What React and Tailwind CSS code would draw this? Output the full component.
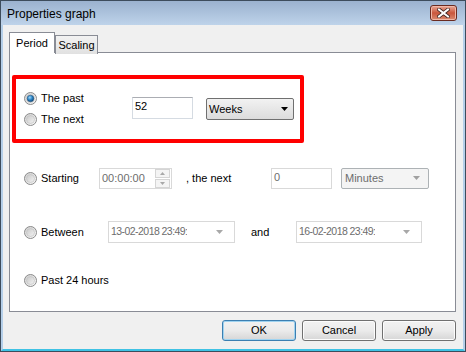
import React from "react";

const F = { fontFamily: '"Liberation Sans", Arial, sans-serif' };

function Radio({ checked }) {
  return (
    <svg width="13" height="13" viewBox="0 0 13 13" className="shrink-0">
      <defs>
        <linearGradient id="rg" x1="0" y1="0" x2="1" y2="1">
          <stop offset="0" stopColor="#d0d0d0" />
          <stop offset="1" stopColor="#fafafa" />
        </linearGradient>
        <linearGradient id="ri" x1="0" y1="0" x2="1" y2="1">
          <stop offset="0" stopColor="#c8c8c8" />
          <stop offset="1" stopColor="#f4f4f4" />
        </linearGradient>
        <radialGradient id="rb" cx="0.4" cy="0.35" r="0.7">
          <stop offset="0" stopColor="#9fd7f8" />
          <stop offset="0.5" stopColor="#2d86c8" />
          <stop offset="1" stopColor="#0b3f6e" />
        </radialGradient>
      </defs>
      <circle cx="6.5" cy="6.5" r="6" fill="url(#rg)" stroke="#8a8a8a" strokeWidth="1" />
      <circle cx="6.5" cy="6.5" r="4" fill="url(#ri)" stroke="#bdbdbd" strokeWidth="0.6" />
      {checked && <circle cx="6.5" cy="6.5" r="3.3" fill="url(#rb)" stroke="#1b4f7a" strokeWidth="0.5" />}
    </svg>
  );
}

function Arrow({ color = "#000", w = 7, h = 4 }) {
  return (
    <svg width={w} height={h} viewBox={`0 0 ${w} ${h}`} className="shrink-0">
      <polygon points={`0,0 ${w},0 ${w / 2},${h}`} fill={color} />
    </svg>
  );
}

function Btn({ children, def }) {
  return (
    <div
      className={`w-[74px] h-[21px] rounded-[3px] border flex items-center justify-center text-[11px] text-black bg-gradient-to-b from-[#f2f2f2] via-[#ebebeb] to-[#d6d6d6] ${
        def ? "border-[#3c7fb1] shadow-[inset_0_0_0_1px_#9fd3f0]" : "border-[#707070] shadow-[inset_0_0_0_1px_#fcfcfc]"
      }`}
    >
      {children}
    </div>
  );
}

function DateBox({ value, w }) {
  return (
    <div className={`${w} h-[22px] border border-[#d9d9d9] flex items-center pl-[2px] pr-[11px] text-[#6d6d6d]`}>
      <span className="w-[76px] overflow-hidden whitespace-nowrap text-[10.5px] tracking-[-0.55px]">{value}</span>
      <span className="flex-1" />
      <Arrow color="#a8a8a8" w={7} h={4} />
    </div>
  );
}

export default function App() {
  return (
    <div className="w-[466px] h-[352px] flex flex-col bg-[#f0f0f0] border border-[#3d4c5c]" style={F}>
      {/* title bar */}
      <div className="h-[24px] flex items-start justify-between pl-[6px] pr-[8px] bg-gradient-to-b from-[#9bb2cf] to-[#bed3ea]">
        <div className="text-[12px] text-black leading-none mt-[7px]">Properties graph</div>
        <div className="mt-[4px] w-[27px] h-[16px] rounded-[3px] border border-[#6a2b20] bg-gradient-to-b from-[#e8a896] via-[#c9563c] to-[#d98a70] flex items-center justify-center shadow-[inset_0_0_0_1px_#f0b8a8]">
          <svg width="13" height="10" viewBox="0 0 13 10">
            <path d="M2 1.5 L11 8.5 M11 1.5 L2 8.5" stroke="#3b2420" strokeWidth="3.6" strokeLinecap="square" />
            <path d="M2 1.5 L11 8.5 M11 1.5 L2 8.5" stroke="#ffffff" strokeWidth="2" strokeLinecap="square" />
          </svg>
        </div>
      </div>

      {/* body */}
      <div className="flex-1 flex flex-col pl-[6px] pr-[7px] border-x-2 border-b-2 border-x-[#b5cfe9] border-b-[#3fc2e4]">
        {/* tabs */}
        <div className="mt-[7px] flex items-end h-[21px] relative z-10">
          <div className="w-[46px] h-[21px] bg-white border-l border-t border-r border-[#898c95] flex items-center justify-center text-[11px] text-black">
            Period
          </div>
          <div className="w-[43px] h-[19px] -mb-px bg-gradient-to-b from-[#f2f2f2] to-[#e1e1e1] border-l border-t border-r border-[#898c95] flex items-center justify-center text-[11px] text-black">
            Scaling
          </div>
        </div>

        {/* panel */}
        <div className="-mt-px h-[260px] bg-white border border-[#898c95] flex flex-col text-[11px] text-black">
          {/* red box */}
          <div className="ml-[2px] mt-[22px] w-[292px] h-[68px] border-4 border-[#ff0000] rounded-[2px] flex items-center">
            <div className="pl-[8px] w-[116px] flex flex-col">
              <div className="h-[21px] flex items-center gap-[4px]">
                <Radio checked />
                <span>The past</span>
              </div>
              <div className="h-[21px] flex items-center gap-[4px]">
                <Radio />
                <span>The next</span>
              </div>
            </div>
            <div className="w-[61px] h-[22px] border border-[#d5dbe2] border-t-[#abadb3] pl-[2px] pt-[3px] leading-none -mt-[2px]">
              52
            </div>
            <div className="ml-[13px] w-[88px] h-[22px] rounded-[2px] border border-[#707070] bg-gradient-to-b from-[#f2f2f2] to-[#dcdcdc] flex items-center justify-between pl-[2px] pr-[5px]">
              <span>Weeks</span>
              <Arrow />
            </div>
          </div>

          {/* starting */}
          <div className="mt-[24px] pl-[14px] h-[22px] flex items-center">
            <div className="w-[75px] flex items-center gap-[4px]">
              <Radio />
              <span>Starting</span>
            </div>
            <div className="w-[73px] h-[21px] border border-[#d9d9d9] flex items-center justify-between pl-[2px] pr-[1px]">
              <span className="text-[#6d6d6d]">00:00:00</span>
              <div className="flex flex-col gap-px">
                <div className="w-[15px] h-[9px] border border-[#d5d5d5] bg-[#f4f4f4] flex items-center justify-center">
                  <svg width="5" height="3"><polygon points="0,3 5,3 2.5,0" fill="#a8a8a8" /></svg>
                </div>
                <div className="w-[15px] h-[9px] border border-[#d5d5d5] bg-[#f4f4f4] flex items-center justify-center">
                  <svg width="5" height="3"><polygon points="0,0 5,0 2.5,3" fill="#a8a8a8" /></svg>
                </div>
              </div>
            </div>
            <div className="ml-[14px] w-[85px]">, the next</div>
            <div className="w-[61px] h-[21px] border border-[#d9d9d9] pl-[2px] pt-[3px] leading-none text-[#6d6d6d]">0</div>
            <div className="ml-[9px] w-[88px] h-[21px] rounded-[2px] border border-[#adb2b5] bg-[#f4f4f4] flex items-center justify-between pl-[3px] pr-[8px] text-[#6d6d6d]">
              <span>Minutes</span>
              <Arrow color="#a0a0a0" w={7} h={4} />
            </div>
          </div>

          {/* between */}
          <div className="mt-[32px] pl-[14px] h-[22px] flex items-center">
            <div className="w-[84px] flex items-center gap-[4px]">
              <Radio />
              <span>Between</span>
            </div>
            <DateBox value="13-02-2018 23:49:00" w="w-[127px]" />
            <div className="ml-[16px] w-[45px]">and</div>
            <DateBox value="16-02-2018 23:49:00" w="w-[126px]" />
          </div>

          {/* past 24 */}
          <div className="mt-[27px] pl-[14px] h-[20px] flex items-center gap-[4px]">
            <Radio />
            <span>Past 24 hours</span>
          </div>
        </div>

        {/* buttons */}
        <div className="mt-[8px] flex justify-end gap-[6px]">
          <Btn def>OK</Btn>
          <Btn>Cancel</Btn>
          <Btn>Apply</Btn>
        </div>
      </div>
    </div>
  );
}
